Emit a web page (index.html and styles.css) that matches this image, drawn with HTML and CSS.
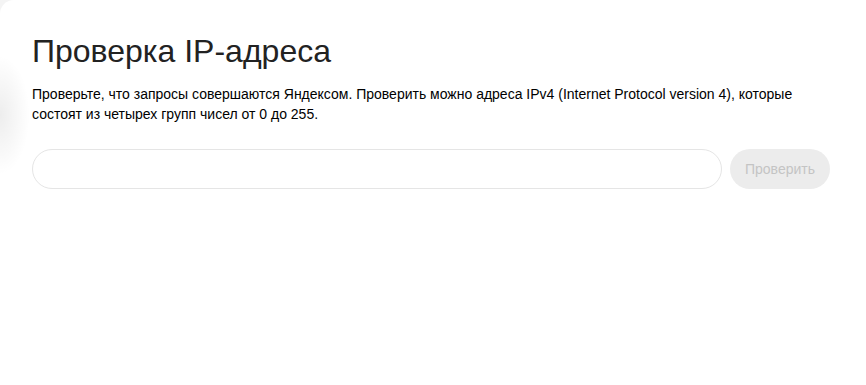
FILE: index.html
```html
<html>
<head>
  <meta charset="UTF-8">
  <title>Проверка IP-адреса</title>
  <link rel="stylesheet" href="styles.css">
</head>
<body>

<main class="card">
  <h1 class="title">Проверка IP-адреса</h1>
  <p class="lead">Проверьте, что запросы совершаются Яндексом. Проверить можно адреса IPv4 (Internet Protocol version 4), которые состоят из четырех групп чисел от 0 до 255.</p>

  <form class="check">
    <input class="check-input" type="text" />
    <button class="check-btn" type="submit" disabled>Проверить</button>
  </form>
</main>

</body>
</html>
```

FILE: styles.css
```css
html, body { height: 100%; }
body { margin: 0; padding: 0; background: #f4f4f4; font-family: "Liberation Sans", Arial, sans-serif; color: #000; }

.card {
  position: relative;
  box-sizing: border-box;
  min-height: 100%;
  background: #fff;
  border-top-left-radius: 14px;
  padding: 33px 36px 0 32px;
}
/* soft shade on the left edge */
.card:before {
  content: "";
  position: absolute;
  left: -30px;
  top: 55px;
  width: 60px;
  height: 120px;
  background: radial-gradient(ellipse at center, rgba(0,0,0,0.07), rgba(0,0,0,0) 70%);
  pointer-events: none;
}

.title {
  margin: 0;
  font-weight: normal;
  font-size: 32px;
  line-height: 36px;
  color: #222;
}
.lead {
  margin: 15px 0 0;
  font-size: 14px;
  line-height: 20px;
}

.check {
  display: flex;
  gap: 8px;
  margin: 25px 0 0;
}
.check-input {
  flex: 1;
  box-sizing: border-box;
  height: 40px;
  border: 1px solid #e5e5e5;
  border-radius: 20px;
  padding: 0 18px;
  font: 14px "Liberation Sans", Arial, sans-serif;
  outline: none;
}
.check-btn {
  box-sizing: border-box;
  width: 100px;
  height: 40px;
  border: 0;
  border-radius: 20px;
  background: #ececec;
  color: #c4c4c4;
  font: 14px "Liberation Sans", Arial, sans-serif;
  padding: 0;
}
```
